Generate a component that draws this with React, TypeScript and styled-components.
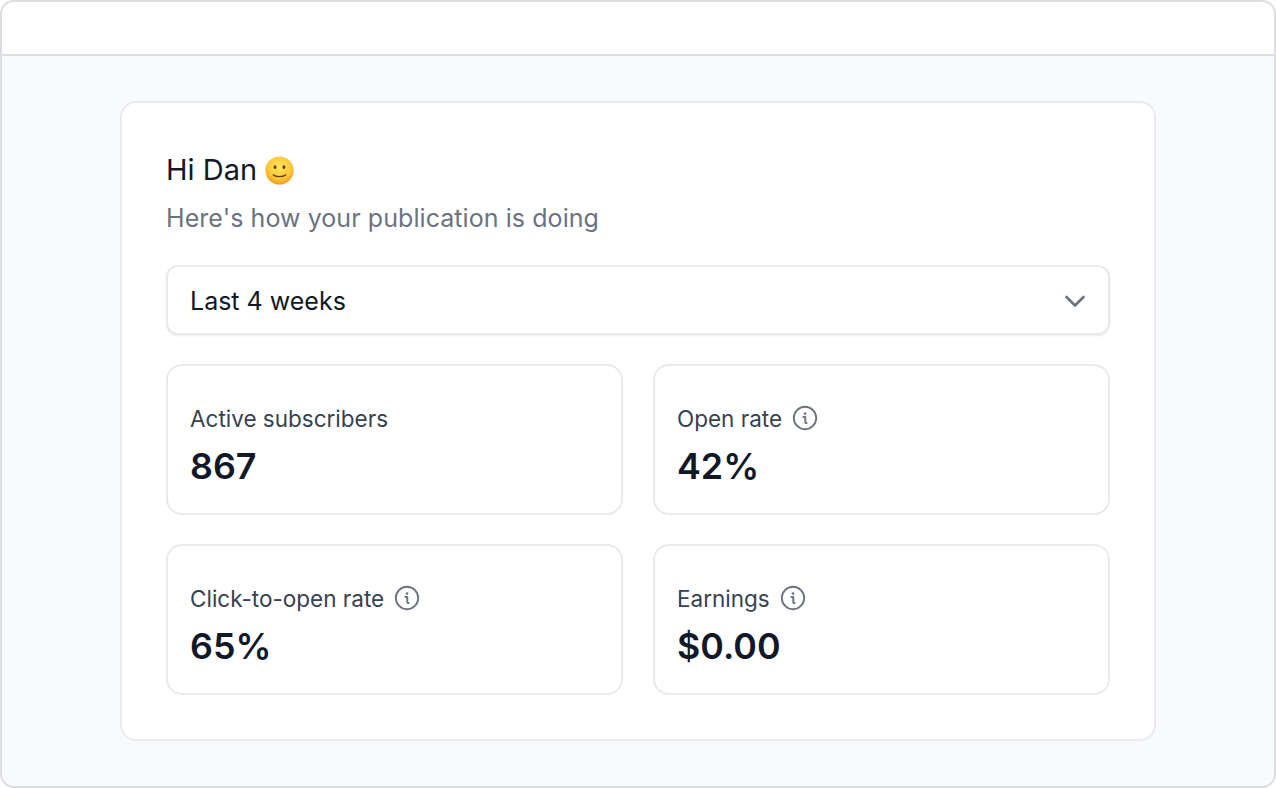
import styled, { createGlobalStyle } from "styled-components";

const GlobalStyle = createGlobalStyle`
  html, body {
    margin: 0;
    padding: 0;
    background: #ffffff;
  }
  * {
    box-sizing: border-box;
  }
`;

const Frame = styled.div`
  display: flex;
  flex-direction: column;
  width: 1276px;
  height: 788px;
  overflow: hidden;
  border: 2px solid #dcdee1;
  border-radius: 14px;
  background: #f9fafb;
  font-family: Inter, "Liberation Sans", sans-serif;
`;

const TopBar = styled.div`
  height: 54px;
  flex-shrink: 0;
  background: #ffffff;
  border-bottom: 2px solid #dcdee1;
`;

const Main = styled.main`
  padding: 45px 118px 0;
`;

const Card = styled.section`
  height: 640px;
  padding: 44px;
  background: #ffffff;
  border: 2px solid #e8eaee;
  border-radius: 16px;
`;

const Greeting = styled.h1`
  display: flex;
  align-items: center;
  gap: 8px;
  height: 44px;
  margin: 0;
  padding-top: 2px;
  font-size: 29px;
  font-weight: 400;
  line-height: 44px;
  color: #111827;
`;

const Subtitle = styled.p`
  height: 40px;
  margin: 7px 0 0;
  font-size: 25px;
  letter-spacing: 0.07px;
  line-height: 40px;
  color: #6b7280;
`;

const Select = styled.div`
  display: flex;
  align-items: center;
  justify-content: space-between;
  height: 70px;
  margin-top: 27px;
  padding: 1px 21px 0 22px;
  background: #ffffff;
  border: 2px solid #e8eaee;
  border-radius: 12px;
  box-shadow: 0 1px 2px rgba(0, 0, 0, 0.08);
  font-size: 25px;
  color: #111827;
`;

const Stats = styled.div`
  display: grid;
  grid-template-columns: 457px 457px;
  grid-auto-rows: 151px;
  gap: 29px 30px;
  margin-top: 29px;
`;

const Stat = styled.div`
  padding: 34px 22px 0;
  border: 2px solid #e8eaee;
  border-radius: 16px;
`;

const Label = styled.div`
  display: flex;
  align-items: center;
  gap: 10px;
  height: 36px;
  font-size: 22.5px;
  font-weight: 400;
  color: #374151;
`;

const Value = styled.div`
  margin-top: 6px;
  font-size: 35.8px;
  font-weight: 600;
  line-height: 48px;
  color: #111827;
`;

const InfoIcon = () => (
  <svg width="26" height="26" viewBox="0 0 26 26" fill="none">
    <circle cx="13" cy="13" r="11.2" stroke="#6b7280" strokeWidth="1.9" />
    <circle cx="13" cy="8.6" r="1.3" fill="#6b7280" />
    <path
      d="M11.4 12h1.9v5.2c0 .6.4.9 1.3.8"
      stroke="#6b7280"
      strokeWidth="1.9"
      strokeLinecap="round"
      strokeLinejoin="round"
    />
  </svg>
);

const ChevronIcon = () => (
  <svg width="24" height="24" viewBox="0 0 24 24" fill="none">
    <path
      d="M3.5 8l8.5 8.5L20.5 8"
      stroke="#6b7280"
      strokeWidth="2.6"
      strokeLinecap="round"
      strokeLinejoin="round"
    />
  </svg>
);

const SmileIcon = () => (
  <svg width="29" height="29" viewBox="0 0 30 30">
    <defs>
      <radialGradient id="smile" cx="50%" cy="38%" r="62%">
        <stop offset="0%" stopColor="#fee25f" />
        <stop offset="65%" stopColor="#fcc93a" />
        <stop offset="100%" stopColor="#f19a1c" />
      </radialGradient>
    </defs>
    <circle cx="15" cy="15" r="14.6" fill="url(#smile)" />
    <ellipse cx="10.4" cy="11.5" rx="1.5" ry="2" fill="#5b3a12" />
    <ellipse cx="19.6" cy="11.5" rx="1.5" ry="2" fill="#5b3a12" />
    <path
      d="M8.5 19.5c3.6 2.4 9.4 2.4 13 0"
      stroke="#6b4316"
      strokeWidth="1.4"
      fill="none"
      strokeLinecap="round"
    />
  </svg>
);

const stats = [
  { label: "Active subscribers", value: "867", info: false },
  { label: "Open rate", value: "42%", info: true },
  { label: "Click-to-open rate", value: "65%", info: true },
  { label: "Earnings", value: "$0.00", info: true },
];

export default function App() {
  return (
    <Frame>
      <GlobalStyle />
      <TopBar />
      <Main>
        <Card>
          <Greeting>
            Hi Dan <SmileIcon />
          </Greeting>
          <Subtitle>Here's how your publication is doing</Subtitle>
          <Select>
            Last 4 weeks
            <ChevronIcon />
          </Select>
          <Stats>
            {stats.map((stat) => (
              <Stat key={stat.label}>
                <Label>
                  {stat.label}
                  {stat.info && <InfoIcon />}
                </Label>
                <Value>{stat.value}</Value>
              </Stat>
            ))}
          </Stats>
        </Card>
      </Main>
    </Frame>
  );
}
